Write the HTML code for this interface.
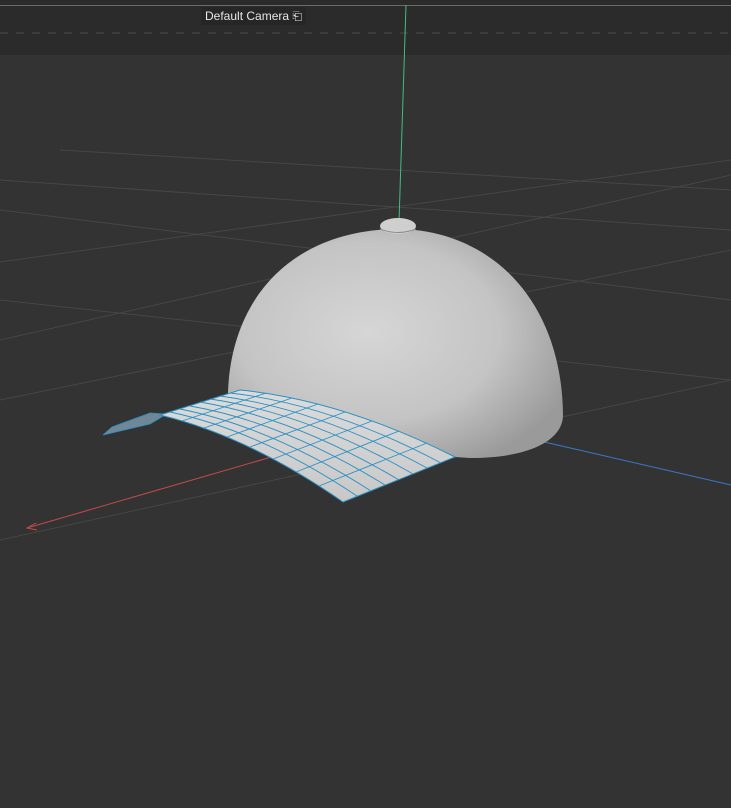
<!DOCTYPE html>
<html><head><style>
html,body{margin:0;padding:0;background:#333;}
body{width:731px;height:808px;overflow:hidden;position:relative;font-family:"Liberation Sans",sans-serif;}
.top{position:absolute;left:0;top:0;width:731px;height:55px;background:#2b2b2b;}
.cam{position:absolute;left:201px;top:7px;height:18px;padding:0 4px;background:#262626;color:#e6e6e6;font-size:12px;line-height:18px;}
</style></head><body>
<div class="top"></div>
<svg width="731" height="808" style="position:absolute;left:0;top:0">
<defs>
<radialGradient id="dg" cx="0.42" cy="0.45" r="0.65">
<stop offset="0" stop-color="#d6d6d6"/><stop offset="0.6" stop-color="#c4c4c4"/><stop offset="1" stop-color="#9a9a9a"/>
</radialGradient>
<linearGradient id="bg" x1="0" y1="0" x2="0" y2="1">
<stop offset="0" stop-color="#dcdcdc"/><stop offset="1" stop-color="#c8c8c8"/>
</linearGradient>
</defs>
<line x1="0" y1="5.5" x2="731" y2="5.5" stroke="#6a6a6a" stroke-width="1"/>
<line x1="0" y1="33" x2="731" y2="33" stroke="#4a4a4a" stroke-dasharray="8,8"/>
<g stroke="#464646" stroke-width="1" fill="none">
<line x1="0" y1="262" x2="731" y2="160"/>
<line x1="0" y1="210" x2="731" y2="300"/>
<line x1="0" y1="180" x2="731" y2="230"/>
<line x1="0" y1="340" x2="731" y2="175"/>
<line x1="0" y1="300" x2="731" y2="380"/>
<line x1="0" y1="400" x2="731" y2="250"/>
<line x1="0" y1="540" x2="731" y2="380"/>
<line x1="60" y1="150" x2="731" y2="190"/>
</g>
<line x1="406" y1="5" x2="399" y2="222" stroke="#3fbf7f" stroke-width="1"/>
<line x1="27" y1="528" x2="330" y2="440" stroke="#c24a4a" stroke-width="1"/>
<path d="M36,523 L27,528 L37,530" stroke="#c24a4a" fill="none"/>
<line x1="540" y1="441" x2="731" y2="485" stroke="#3a78c8" stroke-width="1"/>
<path d="M228,392 C232,290 300,230 396,229 C490,229 562,300 563,415 C563,440 530,458 470,458 L440,456 L300,420 L228,402 Z" fill="url(#dg)"/>
<ellipse cx="398" cy="226" rx="18" ry="8" fill="#cfcfcf"/>
<path d="M380,229 Q398,236 416,229" stroke="#8a8a8a" fill="none"/>
<path d="M103,435 L112,427 L150,413 L166,414 L160,418 L150,424 Z" fill="#6f8796" stroke="#2a90c4" stroke-width="0.8"/>
<path d="M160,415 L240,390 Q342,400 455,457 L343,502 Q248,436 160,415 Z" fill="url(#bg)" stroke="#2a90c4" stroke-width="1"/>
<g stroke="#2a90c4" stroke-width="0.9" fill="none">
<path d="M170,412 Q260,431 357,496"/>
<path d="M180,409 Q271,427 371,491"/>
<path d="M190,406 Q283,422 385,485"/>
<path d="M200,402 Q295,418 399,480"/>
<path d="M210,399 Q307,413 413,474"/>
<path d="M220,396 Q318,409 427,468"/>
<path d="M230,393 Q330,404 441,463"/>
<path d="M182,421 L266,393"/>
<path d="M204,428 L292,398"/>
<path d="M227,437 L318,404"/>
<path d="M250,447 L345,412"/>
<path d="M273,459 L372,421"/>
<path d="M296,472 L399,431"/>
<path d="M319,486 L427,443"/>
</g>
</svg>
<div class="cam">Default Camera &#x2397;</div>
</body></html>
